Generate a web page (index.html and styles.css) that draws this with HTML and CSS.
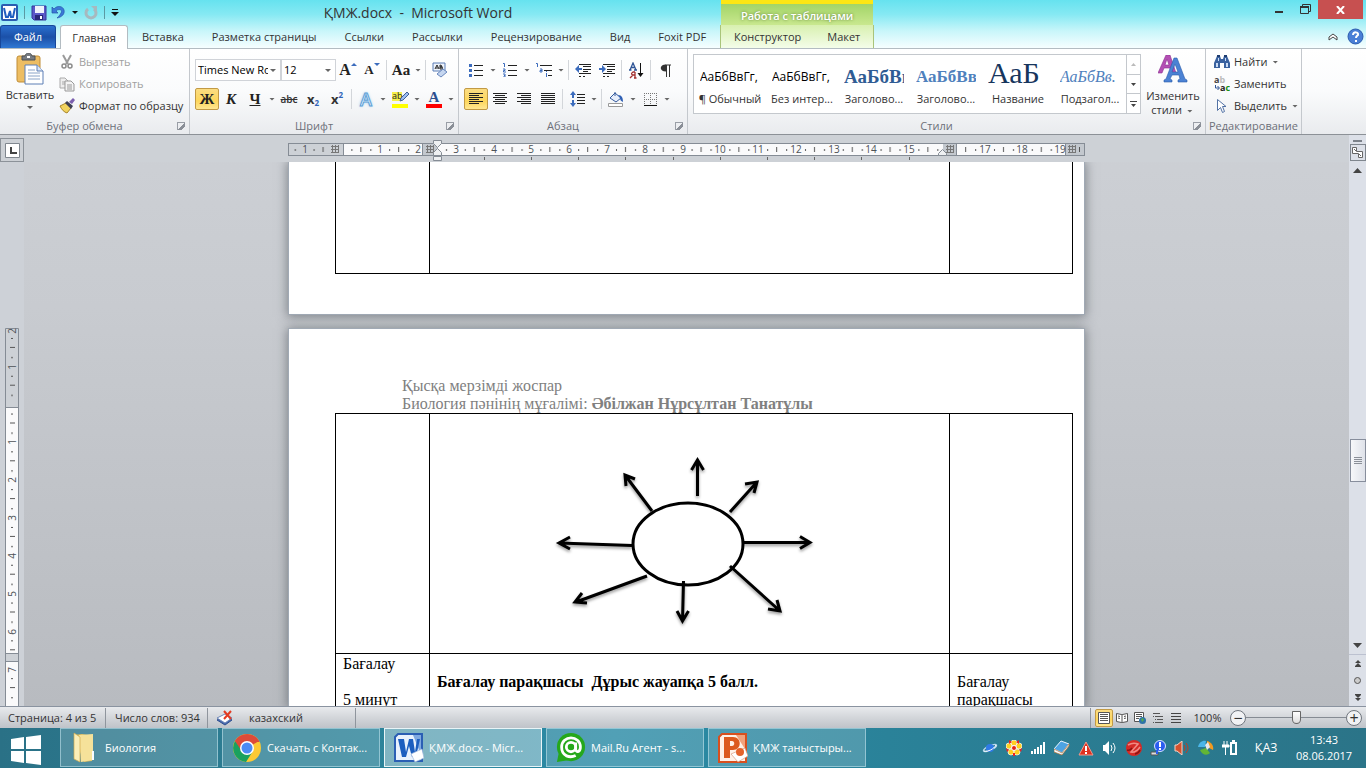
FILE: index.html
```html
<!DOCTYPE html>
<html lang="ru">
<head>
    <meta charset="UTF-8">
    <meta name="viewport" content="width=device-width, initial-scale=1.0">
    <title>ҚМЖ.docx - Microsoft Word</title>
    <link rel="stylesheet" href="styles.css">
</head>
<body>
    <header class="top">
        <div class="titlebar">
            <div class="quick-access">
                <svg width="17" height="17" viewBox="0 0 17 17"><rect x="1" y="1" width="15" height="15" rx="1" fill="#fff" stroke="#2a5db0" stroke-width="2"/><path d="M3 4l2 9h2l2-6 1 6h2l2-9" fill="none" stroke="#1f5fc0" stroke-width="2"/></svg>
                <span class="qa-line"></span>
                <button aria-label="Сохранить"><svg width="16" height="16" viewBox="0 0 16 16"><path d="M1 1h14v14H3l-2-2z" fill="#5a58c8" stroke="#35349a"/><path d="M4 1h9v7H4z" fill="#eef2fb"/><path d="M4 10h8v5H4z" fill="#282878"/><path d="M9 11h2v3H9z" fill="#fff"/></svg></button>
                <button aria-label="Отменить"><svg width="15" height="15" viewBox="0 0 15 15"><path d="M1 2v6h6L5 6c3-3 7-1 5 2-1 2-2 3-4 5 5-1 8-4 7-8-1-4-7-5-10-1z" fill="#3b78d8" stroke="#2455a8" stroke-width=".7"/></svg></button>
                <span class="caret dark"></span>
                <button aria-label="Повторить"><svg width="14" height="15" viewBox="0 0 14 15"><path d="M4 4a5 5 0 1 0 6 0" fill="none" stroke="#a7b9bf" stroke-width="3"/><path d="M7 1h6v6z" fill="#a7b9bf"/></svg></button>
                <span class="qa-line"></span>
                <button aria-label="Настройка панели"><svg width="8" height="7" viewBox="0 0 8 7"><path d="M1 0h6v1H1zM0 3h8L4 7z" fill="#111"/></svg></button>
            </div>
            <h1>ҚМЖ.docx&nbsp; -&nbsp; Microsoft Word</h1>
            <div class="window-buttons">
                <button aria-label="Свернуть"><svg width="9" height="10" viewBox="0 0 9 10"><path d="M0 7h8v2H0z" fill="#333"/></svg></button>
                <button aria-label="Развернуть"><svg width="11" height="10" viewBox="0 0 11 10"><path d="M.500 2.500h8v7h-8zM2.500 2V.500h8v7H9" fill="none" stroke="#333"/><path d="M0 2h9v2H0z" fill="#333"/></svg></button>
                <button class="close" aria-label="Закрыть"><svg width="9" height="8" viewBox="0 0 9 8"><path d="M1 0l7 8M8 0L1 8" stroke="#fff" stroke-width="2"/></svg></button>
            </div>
        </div>
        <nav class="tabs">
            <button class="tab file">Файл</button>
            <button class="tab active">Главная</button>
            <button class="tab">Вставка</button>
            <button class="tab">Разметка страницы</button>
            <button class="tab">Ссылки</button>
            <button class="tab">Рассылки</button>
            <button class="tab">Рецензирование</button>
            <button class="tab">Вид</button>
            <button class="tab">Foxit PDF</button>
            <div class="context-tabs">
                <span class="context-title">Работа с таблицами</span>
                <button class="tab">Конструктор</button>
                <button class="tab">Макет</button>
            </div>
            <div class="tabs-right">
                <button aria-label="Свернуть ленту"><svg width="10" height="8" viewBox="0 0 10 8"><path d="M1 4l4-3 4 3v3L5 4 1 7z" fill="#fff" stroke="#444"/></svg></button>
                <button aria-label="Справка"><svg width="17" height="17" viewBox="0 0 17 17"><circle cx="8.500" cy="8.500" r="7.500" fill="#4a7fd6" stroke="#2b5cae"/><path d="M6 7c0-4 6-3 5 0-1 1-2 1-2 3M9 12v2" fill="none" stroke="#fff" stroke-width="2"/></svg></button>
            </div>
        </nav>
    </header>

    <section class="ribbon">
        <div class="group clipboard">
            <div class="group-body">
                <button class="big">
                    <svg width="28" height="32" viewBox="0 0 28 32"><rect x="1" y="3" width="23" height="26" rx="2" fill="#edbd62" stroke="#c08d38"/><path d="M6 7V3h3c1-4 6-4 7 0h3v4z" fill="#777c82" stroke="#4c5156"/><path d="M11 3h3v2h-3z" fill="#fff"/><path d="M9 12h12l6 6v13H9z" fill="#fff" stroke="#5c7fb5"/><path d="M21 12v6h6" fill="#dbe6f5" stroke="#5c7fb5"/><path d="M12 17h7M12 20h12M12 23h12M12 26h12" stroke="#8aa4c8"/></svg>
                    <span>Вставить</span>
                    <span class="caret"></span>
                </button>
                <div class="stack">
                    <button class="small" disabled><svg width="16" height="16" viewBox="0 0 16 16"><path d="M4 1l5 9M12 1L7 10" stroke="#9a9a9a" stroke-width="2"/><circle cx="5" cy="12" r="2" fill="none" stroke="#8c8c8c" stroke-width="1.500"/><circle cx="11" cy="12" r="2" fill="none" stroke="#8c8c8c" stroke-width="1.500"/></svg>Вырезать</button>
                    <button class="small" disabled><svg width="16" height="16" viewBox="0 0 16 16"><path d="M1 2h5l3 3v7H1z" fill="#eee" stroke="#aaa"/><path d="M3 6h4M3 8h4" stroke="#aaa"/><path d="M6 5h6l3 3v7H6z" fill="#f4f4f4" stroke="#999"/><path d="M8 9h5M8 11h5M8 13h5" stroke="#999"/></svg>Копировать</button>
                    <button class="small"><svg width="16" height="16" viewBox="0 0 16 16"><path d="M1 8l6-3 5 5-4 5c-3-1-5-3-7-7z" fill="#f1d35e" stroke="#a9862b"/><path d="M6 5l2-2 6 5-2 3z" fill="#3d3f55"/><path d="M10 4l4-4 2 2-3 4z" fill="#7b5fae"/></svg>Формат по образцу</button>
                </div>
            </div>
            <div class="group-label"><span>Буфер обмена</span><i class="launcher"></i></div>
        </div>

        <div class="group font">
            <div class="group-body lines">
                <div class="line">
                    <span class="combo name"><select aria-label="Шрифт"><option>Times New Roman</option></select></span>
                    <span class="combo size"><select aria-label="Размер шрифта"><option>12</option></select></span>
                    <button class="ib serif big-a" aria-label="Увеличить размер">A<i class="up"></i></button>
                    <button class="ib serif small-a" aria-label="Уменьшить размер">A<i class="down"></i></button>
                    <span class="sep"></span>
                    <button class="ib serif case">Aa</button><span class="caret"></span>
                    <span class="sep"></span>
                    <button class="ib" aria-label="Очистить формат"><svg width="16" height="16" viewBox="0 0 16 16"><path d="M1 1h12v8H1z" fill="#eef3fb" stroke="#5a7db5"/><path d="M3 7l2-4 2 4M4 6h2M8 3v4h2q1-1 0-2H8h2q0-2-2-2" fill="none" stroke="#222"/><path d="M5 12l6-5 4 3-6 5z" fill="#c5d6f0" stroke="#6a88bd"/></svg></button>
                </div>
                <div class="line">
                    <button class="ib serif on">Ж</button>
                    <button class="ib serif italic">К</button>
                    <button class="ib serif underline">Ч</button><span class="caret"></span>
                    <button class="ib strike">abc</button>
                    <button class="ib script">x<sub>2</sub></button>
                    <button class="ib script">x<sup>2</sup></button>
                    <span class="sep"></span>
                    <button class="ib effect">A</button><span class="caret"></span>
                    <button class="ib marker" aria-label="Цвет выделения"><svg width="17" height="17" viewBox="0 0 17 17"><path d="M0 1h10v9H0z" fill="#f6f04a"/><text x="0" y="8" font-family="Open Sans, sans-serif" font-size="9" fill="#222">ab</text><path d="M8 10l1-3 6-6 2 2-6 6z" fill="#9dbdf0" stroke="#3f5f95"/><path d="M0 13h16v4H0z" fill="#ff0"/></svg></button><span class="caret"></span>
                    <button class="ib serif color"><span>A</span></button><span class="caret"></span>
                </div>
            </div>
            <div class="group-label"><span>Шрифт</span><i class="launcher"></i></div>
        </div>

        <div class="group paragraph">
            <div class="group-body lines">
                <div class="line">
                    <button class="ib" aria-label="Маркеры"><svg width="14" height="14" viewBox="0 0 14 14"><path d="M0 1h3v3H0zM0 6h3v3H0zM0 11h3v3H0z" fill="#3c6cbd"/><path d="M5 2.500h9M5 7.500h9M5 12.500h9" stroke="#222"/></svg></button><span class="caret"></span>
                    <button class="ib" aria-label="Нумерация"><svg width="14" height="14" viewBox="0 0 14 14"><path d="M0 .500h1.500V4M0 6h2v1.500H.500V9H3M0 11h2v3H0M1 12.500h1" fill="none" stroke="#3c6cbd"/><path d="M5 2.500h9M5 7.500h9M5 12.500h9" stroke="#222"/></svg></button><span class="caret"></span>
                    <button class="ib" aria-label="Многоуровневый список"><svg width="16" height="14" viewBox="0 0 16 14"><path d="M0 .500h1.500V4M4 6h2v3H4V7.500h2M10.500 10v4M10.500 8v1" fill="none" stroke="#3c6cbd"/><path d="M4 2.500h12M8 7.500h8M12 12.500h4" stroke="#222"/></svg></button><span class="caret"></span>
                    <span class="sep"></span>
                    <button class="ib" aria-label="Уменьшить отступ"><svg width="16" height="14" viewBox="0 0 16 14"><path d="M4 1.500h12M8 3.500h8M8 6.500h8M8 8.500h5M4 10.500h12" stroke="#222"/><path d="M4 13.500h2M8 13.500h2" stroke="#222"/><path d="M0 6l4-4v3h3v2H4v3z" fill="#3c6cbd"/></svg></button>
                    <button class="ib" aria-label="Увеличить отступ"><svg width="16" height="14" viewBox="0 0 16 14"><path d="M4 1.500h12M8 3.500h8M8 6.500h8M8 8.500h5M4 10.500h12" stroke="#222"/><path d="M4 13.500h2M8 13.500h2" stroke="#222"/><path d="M7 6L3 2v3H0v2h3v3z" fill="#3c6cbd"/></svg></button>
                    <span class="sep"></span>
                    <button class="ib" aria-label="Сортировка"><svg width="15" height="17" viewBox="0 0 15 17"><path d="M1 8l3-7 3 7M2 5.500h4M0 8h2.500M5 8h3" fill="none" stroke="#2f5597" stroke-width="1.300"/><path d="M6 10v6M6 10H4q-3 2 0 3h2M4 13l-3 3M5 16h2.500" fill="none" stroke="#a33030" stroke-width="1.300"/><path d="M11.500 1v12" stroke="#111"/><path d="M8.500 11h6l-3 4z" fill="#111"/></svg></button>
                    <span class="sep"></span>
                    <button class="ib" aria-label="Отобразить все знаки"><svg width="11" height="13" viewBox="0 0 11 13"><path d="M5.500 1H11M6.500 1v12M9.500 1v12" stroke="#333"/><path d="M6 .500v7c-7 0-7-7 0-7z" fill="#333"/></svg></button>
                </div>
                <div class="line">
                    <button class="ib on" aria-label="По левому краю"><svg width="14" height="12" viewBox="0 0 14 12"><path d="M0 .500h14M0 2.500h10M0 4.500h14M0 6.500h10M0 8.500h14M0 10.500h10" stroke="#222"/></svg></button>
                    <button class="ib" aria-label="По центру"><svg width="14" height="12" viewBox="0 0 14 12"><path d="M0 .500h14M2 2.500h10M0 4.500h14M2 6.500h10M0 8.500h14M2 10.500h10" stroke="#222"/></svg></button>
                    <button class="ib" aria-label="По правому краю"><svg width="14" height="12" viewBox="0 0 14 12"><path d="M0 .500h14M4 2.500h10M0 4.500h14M4 6.500h10M0 8.500h14M4 10.500h10" stroke="#222"/></svg></button>
                    <button class="ib" aria-label="По ширине"><svg width="14" height="12" viewBox="0 0 14 12"><path d="M0 .500h14M0 2.500h14M0 4.500h14M0 6.500h14M0 8.500h14M0 10.500h14" stroke="#222"/></svg></button>
                    <span class="sep"></span>
                    <button class="ib" aria-label="Интервал"><svg width="15" height="16" viewBox="0 0 15 16"><path d="M3 0l3 4H4v3H2V4H0zM3 16l3-4H4V9H2v3H0z" fill="#3c6cbd"/><path d="M7 3.500h8M7 6.500h8M7 9.500h8M7 12.500h8" stroke="#222"/></svg></button><span class="caret"></span>
                    <span class="sep"></span>
                    <button class="ib" aria-label="Заливка"><svg width="16" height="16" viewBox="0 0 16 16"><path d="M2 7l5-5 6 5-5 4z" fill="#e7eefb" stroke="#345a9c"/><path d="M7 5V1" stroke="#345a9c"/><path d="M10 4c4 0 5 3 5 7-2-1-3-2-3-4z" fill="#2f5fb4"/><path d="M.500 12.500h14v3H.500z" fill="#fff" stroke="#999"/></svg></button><span class="caret"></span>
                    <button class="ib" aria-label="Границы"><svg width="13" height="13" viewBox="0 0 13 13"><path d="M0 .500h13M0 6.500h13M.500 0v12M6.500 0v12M12.500 0v12" stroke="#777" stroke-dasharray="1 1"/><path d="M0 12.500h13" stroke="#111"/></svg></button><span class="caret"></span>
                </div>
            </div>
            <div class="group-label"><span>Абзац</span><i class="launcher"></i></div>
        </div>

        <div class="group styles">
            <div class="group-body">
                <div class="gallery">
                    <button class="style-item"><span class="sample">АаБбВвГг,</span><span class="style-name">¶ Обычный</span></button>
                    <button class="style-item"><span class="sample">АаБбВвГг,</span><span class="style-name">Без интер...</span></button>
                    <button class="style-item"><span class="sample h1s">АаБбВв</span><span class="style-name">Заголово...</span></button>
                    <button class="style-item"><span class="sample h2s">АаБбВв</span><span class="style-name">Заголово...</span></button>
                    <button class="style-item"><span class="sample titles">АаБ</span><span class="style-name">Название</span></button>
                    <button class="style-item"><span class="sample subs">АаБбВв.</span><span class="style-name">Подзагол...</span></button>
                    <div class="gallery-scroll">
                        <button disabled aria-label="Вверх"><svg width="5" height="3" viewBox="0 0 5 3"><path d="M0 3h5L2.500 0z" fill="#bbb"/></svg></button>
                        <button aria-label="Вниз"><svg width="5" height="3" viewBox="0 0 5 3"><path d="M0 0h5L2.500 3z" fill="#444"/></svg></button>
                        <button aria-label="Все стили"><svg width="7" height="6" viewBox="0 0 7 6"><path d="M0 0h7v1H0zM1 3h5L3.500 6z" fill="#444"/></svg></button>
                    </div>
                </div>
                <button class="big change">
                    <svg width="30" height="28" viewBox="0 0 30 28"><path fill-rule="evenodd" d="M0 18L8 0h4l6 18h-4l-2-5H6l-2 5zM7 10h4L9 4z" fill="#b44fb4" stroke="#8a3190" stroke-width=".6"/><path fill-rule="evenodd" d="M6 27v-2l2-1 8-21h3l8 21 2 1v2h-9v-2l2-1-1-4h-7l-2 4 2 1v2zM14 17h6l-3-8z" fill="#4b82d4" stroke="#2a5baa" stroke-width=".6"/></svg>
                    <span>Изменить</span>
                    <span>стили <span class="caret"></span></span>
                </button>
            </div>
            <div class="group-label"><span>Стили</span><i class="launcher"></i></div>
        </div>

        <div class="group editing">
            <div class="group-body">
                <div class="stack">
                    <button class="small"><svg width="16" height="16" viewBox="0 0 16 16"><path d="M3 2h3l1 3h2l1-3h3l3 7v5h-6V9H6v5H0V9z" fill="#39619f"/><path d="M3 1h3v2H3zM10 1h3v2h-3z" fill="#1d3c70"/><path d="M2 9h2v4H2zM12 9h2v4h-2zM4 4h1v3H4zM11 4h1v3h-1z" fill="#c9dbf5"/></svg>Найти <span class="caret"></span></button>
                    <button class="small"><svg width="16" height="16" viewBox="0 0 16 16"><text x="0" y="7" font-family="Open Sans, sans-serif" font-size="9" font-weight="bold" fill="#444">a<tspan fill="#bbb">b</tspan></text><text x="6" y="15" font-family="Open Sans, sans-serif" font-size="9" font-weight="bold" fill="#222">a<tspan fill="#159015">c</tspan></text><path d="M1.500 9v3H5M3.500 10l2 2-2 2" fill="none" stroke="#2e5496"/></svg>Заменить</button>
                    <button class="small"><svg width="16" height="16" viewBox="0 0 16 16"><path d="M3.500 1.500v11l3-3 2 5 2-1-2-5h3.500z" fill="#fff" stroke="#5272a5"/></svg>Выделить <span class="caret"></span></button>
                </div>
            </div>
            <div class="group-label">Редактирование</div>
        </div>
    </section>

    <main class="workspace">
        <button class="tab-stop" aria-label="Позиция табуляции"><svg width="15" height="15" viewBox="0 0 15 15"><path d="M.500 .500h14v14H.500z" fill="#fff" stroke="#7f868e"/><path d="M6 4v6h6" fill="none" stroke="#444" stroke-width="2"/></svg></button>
        <div class="ruler-row">
            <svg width="797" height="23" viewBox="288 139 797 23" font-family="Open Sans, sans-serif" font-size="10" text-anchor="middle" fill="#4d5257">
                <defs>
                    <pattern id="cm" x="342.400" y="143" width="37.800" height="13" patternUnits="userSpaceOnUse">
                        <path d="M9 6h1v2H9zM18 4h1v5h-1zM28 6h1v2h-1z" fill="#555"/>
                    </pattern>
                    <g id="column"><path d="M0 1.500h8M0 4.500h8M0 7.500h8M1.500 0v8M4.500 0v8M7.500 0v8" stroke="#777"/></g>
                </defs>
                <rect x="288.500" y="143.500" width="796" height="12" fill="#cdd1d6" stroke="#858c95"/>
                <path d="M343 144h84v11h-84zM438 144h505v11H438zM957 144h108v11H957z" fill="#fafafb"/>
                <rect x="288" y="143" width="42" height="13" fill="url(#cm)"/>
                <rect x="346" y="143" width="78" height="13" fill="url(#cm)"/>
                <rect x="441" y="143" width="500" height="13" fill="url(#cm)"/>
                <rect x="960" y="143" width="104" height="13" fill="url(#cm)"/>
                <path d="M343.500 144v11M956.500 144v11M1065.500 144v11M422.500 144v11" stroke="#858c95"/>
                <path d="M423 144h15v11h-15zM943 144h13v11h-13zM1066 144h18v11h-18z" fill="#c3c8ce"/>
                <use href="#column" x="331" y="145"/><use href="#column" x="426" y="145"/><use href="#column" x="946" y="145"/><use href="#column" x="1068" y="145"/>
                <path d="M1079.500 147v5" stroke="#555"/>
                <text x="305" y="153">1</text><text x="380" y="153">1</text><text x="418" y="153">2</text><text x="456" y="153">3</text><text x="494" y="153">4</text><text x="531" y="153">5</text><text x="569" y="153">6</text><text x="607" y="153">7</text><text x="645" y="153">8</text><text x="683" y="153">9</text><text x="720" y="153">10</text><text x="758" y="153">11</text><text x="796" y="153">12</text><text x="834" y="153">13</text><text x="871" y="153">14</text><text x="909" y="153">15</text><text x="985" y="153">17</text><text x="1022" y="153">18</text><text x="1060" y="153">19</text>
                <path d="M484.500 157v3M531.500 157v3M578.500 157v3M625.500 157v3M673.500 157v3M720.500 157v3M767.500 157v3M814.500 157v3M861.500 157v3M909.500 157v3" stroke="#666"/>
                <path d="M433.500 140.500h8v3l-4 4-4-4zM437.500 148.500l4 4v3h-8v-3zM433.500 156.500h8v4h-8zM942.500 149.500l4 4v2h-8v-2z" fill="#eef0f2" stroke="#858c95"/>
            </svg>
        </div>
        <div class="ruler-column">
            <svg width="14" height="378" viewBox="5 328 14 378" font-family="Open Sans, sans-serif" font-size="10" text-anchor="middle" fill="#4d5257">
                <defs>
                    <pattern id="cmv" x="5" y="404.600" width="14" height="37.800" patternUnits="userSpaceOnUse">
                        <path d="M6 9h2v1H6zM5 18h5v1H5zM6 28h2v1H6z" fill="#555"/>
                    </pattern>
                </defs>
                <path d="M5.500 328.500h13v400h-13z" fill="#cdd1d6" stroke="#858c95"/>
                <path d="M6 408h12v245H6zM6 662h12v50H6z" fill="#fafafb"/>
                <path d="M5 407.500h14M5 653.500h14M5 661.500h14" stroke="#858c95"/>
                <path d="M5 332h14v320H5zM5 662h14v50H5z" fill="url(#cmv)"/>
                <text transform="translate(16 331) rotate(-90)">2</text><text transform="translate(16 367) rotate(-90)">1</text><text transform="translate(16 442) rotate(-90)">1</text><text transform="translate(16 480) rotate(-90)">2</text><text transform="translate(16 518) rotate(-90)">3</text><text transform="translate(16 556) rotate(-90)">4</text><text transform="translate(16 594) rotate(-90)">5</text><text transform="translate(16 632) rotate(-90)">6</text><text transform="translate(16 670) rotate(-90)">7</text>
            </svg>
        </div>

        <div class="document">
            <article class="page first">
                <table class="plan">
                    <tr><td class="stage"></td><td></td><td class="result"></td></tr>
                </table>
            </article>
            <article class="page second">
                <div class="page-header">
                    <p>Қысқа мерзімді жоспар</p>
                    <p>Биология пәнінің мұғалімі: <b>Әбілжан Нұрсұлтан Танатұлы</b></p>
                </div>
                <table class="plan">
                    <tr class="figure-row">
                        <td class="stage"></td>
                        <td class="figure">
                            <svg width="290" height="200" viewBox="0 0 290 200">
                                <defs>
                                    <filter id="soft" x="-10%" y="-10%" width="120%" height="120%"><feDropShadow dx="0" dy="2" stdDeviation="1.500" flood-opacity=".4"/></filter>
                                </defs>
                                <ellipse cx="148" cy="104" rx="55" ry="41" fill="#fff" stroke="#000" stroke-width="3"/>
                                <g fill="none" stroke="#000" stroke-width="3" filter="url(#soft)">
                                    <path d="M157.500 56V20M151.500 30l6-10 6 10"/>
                                    <path d="M112 71L85 35M86 46l-1-11 10 4"/>
                                    <path d="M190 72l27-30M205 44l12-2-3 11"/>
                                    <path d="M203 102.500h67M260 96.500l10 6-10 6"/>
                                    <path d="M190 126l50 45M228 169l12 2-3-11"/>
                                    <path d="M143.500 141l-1 40M137 171l5.500 10 6-10"/>
                                    <path d="M107 136l-71 26M42 153l-7 9 12 1"/>
                                    <path d="M92 105.500l-73-2.500M30 97l-11 6 11 6"/>
                                </g>
                            </svg>
                        </td>
                        <td class="result"></td>
                    </tr>
                    <tr>
                        <td>Бағалау<br><br>5 минут</td>
                        <td><br><b>Бағалау парақшасы&nbsp; Дұрыс жауапқа 5 балл.</b></td>
                        <td><br>Бағалау парақшасы</td>
                    </tr>
                </table>
            </article>
        </div>

        <div class="scrollbar">
            <span class="split"></span>
            <button class="ruler-toggle" aria-label="Линейка"><svg width="11" height="11" viewBox="0 0 11 11"><path d="M.500 .500h4v4h6v6h-4v-4h-6zM7 7l2 2M2 2l2 2" fill="#fff" stroke="#666"/></svg></button>
            <button class="arrow" aria-label="Вверх"><svg width="9" height="5" viewBox="0 0 9 5"><path d="M0 5h9L4.500 0z" fill="#444"/></svg></button>
            <div class="track"><div class="thumb"></div></div>
            <button class="arrow" aria-label="Вниз"><svg width="9" height="5" viewBox="0 0 9 5"><path d="M0 0h9L4.500 5z" fill="#444"/></svg></button>
            <div class="browse">
                <button aria-label="Предыдущая страница"><svg width="6" height="7" viewBox="0 0 6 7"><path d="M0 3l3-3 3 3zM0 6l3-3 3 3v1H0z" fill="#444"/></svg></button>
                <button aria-label="Выбор объекта перехода"><svg width="7" height="7" viewBox="0 0 7 7"><circle cx="3.500" cy="3.500" r="3" fill="#ccc" stroke="#555"/></svg></button>
                <button aria-label="Следующая страница"><svg width="6" height="7" viewBox="0 0 6 7"><path d="M0 0h6v1L3 4 0 1zM0 4h6L3 7z" fill="#444"/></svg></button>
            </div>
        </div>
    </main>

    <footer class="statusbar">
        <button class="status pages">Страница: 4 из 5</button>
        <button class="status words">Число слов: 934</button>
        <button class="status language"><svg width="17" height="16" viewBox="0 0 17 16"><path d="M1 10l8-4 7 4-7 5z" fill="#4568ae" stroke="#2f4f90"/><path d="M1 8l8-4 7 4-7 5z" fill="#fff" stroke="#6e87b8"/><path d="M8 1l7 8M15 1L8 9" stroke="#e33b22" stroke-width="2"/></svg>казахский</button>
        <div class="views">
            <button class="on" aria-label="Разметка страницы"><svg width="12" height="12" viewBox="0 0 12 12"><path d="M.500 .500h11v11H.500z" fill="#fff" stroke="#555"/><path d="M2 2.500h8M2 4.500h8M2 6.500h8M2 8.500h8" stroke="#555"/></svg></button>
            <button aria-label="Режим чтения"><svg width="12" height="12" viewBox="0 0 12 12"><path d="M.500 1.500l5 1 1 0 5-1v8l-5 1h-1l-5-1zM6 2v9M2 4l2 .500M2 6l2 .500M8 4.500l2-.500M8 6.500l2-.500" fill="#fff" stroke="#555"/></svg></button>
            <button aria-label="Веб-документ"><svg width="12" height="12" viewBox="0 0 12 12"><path d="M.500 .500h9v9h-9z" fill="#fff" stroke="#555"/><path d="M2 2.500h6M2 4.500h6M2 6.500h3" stroke="#555"/><circle cx="8.500" cy="8.500" r="3.500" fill="#2f73a8"/><path d="M7 7l2-1 1 2-2 2z" fill="#56a94c"/></svg></button>
            <button aria-label="Структура"><svg width="10" height="10" viewBox="0 0 10 10"><path d="M0 .500h7M2 3.500h8M4 6.500h6M2 9.500h8" stroke="#555"/><path d="M0 3h1v1H0zM2 6h1v1H2zM0 9h1v1H0z" fill="#555"/></svg></button>
            <button aria-label="Черновик"><svg width="10" height="10" viewBox="0 0 10 10"><path d="M0 .500h10M0 3.500h10M0 6.500h10M0 9.500h10" stroke="#444"/></svg></button>
        </div>
        <button class="percent">100%</button>
        <div class="zoom">
            <button aria-label="Уменьшить">−</button>
            <input type="range" min="0" max="100" value="50" aria-label="Масштаб">
            <button aria-label="Увеличить">+</button>
        </div>
    </footer>

    <nav class="taskbar">
        <button class="start" aria-label="Пуск"><svg width="30" height="30" viewBox="0 0 30 30"><path d="M0 4l13-2v12H0zM15 2l15-2v14H15zM0 16h13v12L0 26zM15 16h15v14l-15-2z" fill="#fff"/></svg></button>
        <button class="task"><svg width="28" height="32" viewBox="0 0 28 32"><path d="M3 3l8-1 10 2v25l-8 1z" fill="#e0bd5c"/><path d="M8 3l14-1v26l-12 2z" fill="#f6e29a"/><path d="M3 1l6 4v25l-6-3z" fill="#fbeeb8" stroke="#d0ab4c" stroke-width=".7"/><path d="M21 19h2v9h-2z" fill="#f7fbff"/></svg><span>Биология</span></button>
        <button class="task"><svg width="28" height="28" viewBox="0 0 28 28"><circle cx="14" cy="14" r="14" fill="#fcc934"/><path d="M14 14L2 7a14 14 0 0 1 24 0z" fill="#dd4b39"/><path d="M14 14L2 7a14 14 0 0 0 11 21l7-11z" fill="#1aa15f"/><path d="M14 8h12.600A14 14 0 0 0 2 7l6 9z" fill="#dd4b39"/><circle cx="14" cy="14" r="7" fill="#fff"/><circle cx="14" cy="14" r="5.500" fill="#4c8bf5"/></svg><span>Скачать с Контак...</span></button>
        <button class="task current"><svg width="30" height="30" viewBox="0 0 30 30"><path d="M4 1h24v27H1V4z" fill="#e9f2fd" stroke="#2b5fb4" stroke-width="2"/><path d="M19 2h8v20z" fill="#7fa9e0"/><path d="M4 6h6l2 13L15 6h4l2 13 2-13h3l-4 18h-4l-3-11-3 11H8z" fill="#1d5fbf"/><path d="M17 21l11-5 2 9-9 4z" fill="#fff" stroke="#9fb9dd" stroke-width=".7"/></svg><span>ҚМЖ.docx - Micr...</span></button>
        <button class="task"><svg width="32" height="32" viewBox="0 0 32 32"><circle cx="16" cy="15" r="15" fill="#25a81b"/><path d="M3 21L1 31l12-2z" fill="#25a81b"/><circle cx="16" cy="15" r="5" fill="none" stroke="#fff" stroke-width="3"/><path d="M21 10v7c0 4 5 4 5-2 0-13-20-13-20 0 0 10 9 12 15 9" fill="none" stroke="#fff" stroke-width="3"/></svg><span>Mail.Ru Агент - s...</span></button>
        <button class="task"><svg width="30" height="30" viewBox="0 0 30 30"><path d="M4 1h24v28H1V4z" fill="#fff1e8" stroke="#d8501f" stroke-width="2"/><path d="M18 2h9v14z" fill="#f2a27c"/><path fill-rule="evenodd" d="M6 4h9c9 0 9 13 0 13h-3v8H6zM12 8v5h2c3 0 3-5 0-5z" fill="#dc5a1f"/><path d="M13 21l14-6 3 8-10 6z" fill="#fff" stroke="#d99b80" stroke-width=".7"/><circle cx="22" cy="19" r="4" fill="#e4622a"/></svg><span>ҚМЖ таныстыры...</span></button>
        <div class="tray">
            <svg width="16" height="16" viewBox="0 0 16 16"><ellipse cx="8" cy="8" rx="7" ry="2" transform="rotate(-25 8 8)" fill="none" stroke="#bcd9ef" stroke-width="1.500"/><circle cx="8" cy="8" r="4" fill="#2f7be8"/><path d="M2 11c4 1 10-2 12-6" fill="none" stroke="#fff"/></svg>
            <svg width="16" height="16" viewBox="0 0 16 16"><g fill="#ffd021" stroke="#fff" stroke-width=".7"><circle cx="8" cy="3" r="3"/><circle cx="3" cy="6" r="3"/><circle cx="13" cy="6" r="3"/><circle cx="5" cy="12" r="3"/><circle cx="11" cy="12" r="3"/></g><path d="M3 0l3 2-3 2zM13 0l-3 2 3 2zM0 8l3 2-2 2zM16 8l-3 2 2 2zM7 13h2v3H7z" fill="#e22"/><circle cx="8" cy="8" r="2.500" fill="#e32214" stroke="#fff"/></svg>
            <svg width="16" height="12" viewBox="0 0 16 12"><path d="M1 9h2v3H1zM4 7h2v5H4zM7 5h2v7H7zM10 3h2v9h-2zM13 0h2v12h-2z" fill="#fff"/></svg>
            <svg width="16" height="16" viewBox="0 0 16 16"><path d="M0 9l7-8 8 3-7 9z" fill="#4da3e2" stroke="#eaf5ff"/><path d="M0 9v3l8 3 7-9V4l-7 9z" fill="#f7fbff" stroke="#b07030" stroke-width=".7"/></svg>
            <svg width="16" height="15" viewBox="0 0 16 15"><path d="M8 1l7 13H1z" fill="#e0301e" stroke="#f3998c"/><path d="M7 5h2v5H7zM7 11h2v2H7z" fill="#fff"/></svg>
            <svg width="16" height="14" viewBox="0 0 16 14"><path d="M1 4h2l4-4v14l-4-4H1z" fill="#fff"/><path d="M9 4q2 3 0 6M11 2q4 5 0 10" fill="none" stroke="#fff"/></svg>
            <svg width="16" height="16" viewBox="0 0 16 16"><circle cx="8" cy="8" r="8" fill="#d42a26"/><path d="M2 5q5-3 10-1L5 12q5 1 9-5" fill="none" stroke="#f08a84" stroke-width="1.500"/><path d="M1 10q3 1 5-2M9 14q4-1 5-4" fill="none" stroke="#8a1311" stroke-width="1.500"/></svg>
            <svg width="16" height="16" viewBox="0 0 16 16"><circle cx="10" cy="6" r="5.500" fill="#2a5df0" stroke="#d9e4ff"/><path d="M9 2h2v5H9zM9 8h2v2H9z" fill="#fff"/><path d="M1 12h7v3H1z" fill="#ddd" stroke="#555"/><path d="M7 10v4" stroke="#2a5df0" stroke-width="2"/></svg>
            <svg width="16" height="14" viewBox="0 0 16 14"><path d="M1 4h2l5-4v14l-5-4H1z" fill="#d4512e" stroke="#f7d3c4"/><path d="M10 4q2 3 0 6M12 2q4 5 0 10" fill="none" stroke="#c23d22"/></svg>
            <svg width="16" height="16" viewBox="0 0 16 16"><path d="M0 7c1-5 5-7 8-6l-1 6z" fill="#4bb5e8"/><path d="M9 1c5 1 7 6 6 9l-6-3z" fill="#f39a20"/><path d="M2 10l6-2 4 5c-3 3-8 2-10-3z" fill="#63b534"/><path d="M7 5l3-3 2 5-3 3z" fill="#e6e9ee"/></svg>
            <svg width="16" height="16" viewBox="0 0 16 16"><path d="M9 3h5v11H9z" fill="none" stroke="#fff" stroke-width="2"/><path d="M10 0h3v2h-3z" fill="#fff"/><path d="M2 1v4M5 1v4M0 5h7v2H0zM3.500 7v8" fill="#fff" stroke="#fff"/></svg>
        </div>
        <button class="lang">ҚАЗ</button>
        <button class="clock"><span>13:43</span><span>08.06.2017</span></button>
    </nav>
</body>
</html>
```
FILE: styles.css
```css
:root {
    --ui-font: 'Open Sans', 'Noto Sans', sans-serif;
    --doc-font: 'Liberation Serif', 'Times New Roman', serif;
    --line: #c4c8cd;
    --text: #333333;
    --on-fill: linear-gradient(#fbdc82, #fdd65c 60%, #ffe791);
    --on-border: #c29a45;
}

* {
    margin: 0;
    padding: 0;
    box-sizing: border-box;
}

body {
    display: flex;
    flex-direction: column;
    height: 100vh;
    overflow: hidden;
    font-family: var(--ui-font);
    font-size: 11px;
    line-height: 16px;
    color: var(--text);
}

button {
    display: flex;
    align-items: center;
    justify-content: center;
    border: none;
    background: none;
    font: inherit;
    color: inherit;
    white-space: nowrap;
}

svg {
    display: block;
    flex: none;
}

.caret {
    display: inline-block;
    flex: none;
    width: 10px;
    height: 3px;
    background: #666;
    clip-path: polygon(2px 0, 8px 0, 5px 3px);
    vertical-align: middle;
}

.caret.dark {
    background: #111;
}

/* Title bar and tabs */
.top {
    flex: none;
    background: linear-gradient(#66e2ef, #86e9f3 30%, #c9f6fa 65%, #f6feff);
    border-bottom: 1px solid #b3bcc2;
}

.titlebar {
    display: flex;
    height: 25px;
}

.quick-access {
    display: flex;
    align-items: center;
    gap: 4px;
    width: 122px;
    padding-left: 1px;
}

.qa-line {
    width: 1px;
    height: 13px;
    margin: 0 2px;
    background: #5b9aa3;
}

.titlebar h1 {
    width: 592px;
    text-align: center;
    font-size: 14px;
    font-weight: 400;
    line-height: 25px;
}

.window-buttons {
    display: flex;
    align-items: flex-start;
    margin-left: auto;
    padding-right: 3px;
}

.window-buttons button {
    width: 26px;
    height: 18px;
}

.window-buttons .close {
    width: 45px;
    height: 19px;
    background: #c75050;
}

.tabs {
    display: flex;
    height: 23px;
}

.tab {
    height: 23px;
    padding: 0 14px;
}

.tab.file {
    width: 56px;
    margin-right: 4px;
    border: 1px solid #17479a;
    border-bottom: none;
    border-radius: 3px 3px 0 0;
    background: linear-gradient(#2a6fce, #1b50a8 50%, #2f78d4);
    color: #fff;
}

.tab.active {
    width: 68px;
    height: 24px;
    padding: 0;
    border: 1px solid #b3bcc2;
    border-bottom: none;
    border-radius: 3px 3px 0 0;
    background: #fff;
}

.context-tabs {
    position: relative;
    display: flex;
    justify-content: center;
    width: 154px;
    border: solid #a9c47a;
    border-width: 0 1px;
    background: linear-gradient(#d8f0b0, #f4fde9);
}

.context-tabs .tab {
    padding: 0 13px;
}

/* Coloured cap that reaches up over the title bar */
.context-title {
    position: absolute;
    left: 0;
    right: 0;
    bottom: 100%;
    height: 25px;
    border-top: 4px solid #fce614;
    background: linear-gradient(#a2d467, #c9e88f);
    color: #fff;
    font-weight: 600;
    line-height: 23px;
    text-align: center;
    text-shadow: 0 0 3px #5d7d33;
}

.tabs-right {
    display: flex;
    align-items: center;
    gap: 9px;
    margin-left: auto;
    padding-right: 2px;
}

/* Ribbon */
.ribbon {
    display: flex;
    flex: none;
    height: 86px;
    background: linear-gradient(#ffffff, #fafbfc 50%, #e9ebee);
    border-bottom: 1px solid #8c9197;
}

.group {
    display: flex;
    flex-direction: column;
    flex: none;
    border-right: 1px solid var(--line);
}

.clipboard { width: 190px; }
.font { width: 269px; }
.paragraph { width: 229px; }
.styles { width: 518px; }
.editing { width: 96px; }

.group-body {
    display: flex;
    flex: 1;
}

.group-label {
    display: flex;
    align-items: center;
    justify-content: center;
    height: 17px;
    color: #6c7079;
}

.group-label span {
    margin: 0 auto;
    padding-right: 8px;
}

.launcher {
    width: 8px;
    height: 8px;
    margin-right: 4px;
    border: solid #999ea6;
    border-width: 1px 0 0 1px;
    background: linear-gradient(135deg, transparent 45%, #8a8f97 45%, #8a8f97 75%, transparent 75%);
}

.big {
    flex-direction: column;
    justify-content: flex-start;
    width: 54px;
    margin-left: 3px;
    padding-top: 4px;
}

.big > span:not(.caret) {
    line-height: 14px;
}

.big > .caret {
    margin-top: 4px;
}

.big svg {
    margin-bottom: 3px;
}

.stack {
    display: flex;
    flex-direction: column;
    align-items: flex-start;
    padding-top: 2px;
}

.small {
    height: 22px;
    padding-left: 2px;
}

.small svg {
    margin-right: 4px;
}

.small .caret {
    margin-left: 3px;
}

.small:disabled {
    color: #a0a0a0;
}

.lines {
    flex-direction: column;
    gap: 7px;
    padding: 10px 0 0 5px;
}

.line {
    display: flex;
    align-items: center;
    height: 22px;
}

.ib {
    flex: none;
    width: 24px;
    height: 22px;
}

.on {
    border: 1px solid var(--on-border);
    border-radius: 2px;
    background: var(--on-fill);
}

.sep {
    flex: none;
    width: 1px;
    height: 20px;
    margin: 0 2px;
    background: #d3d6da;
}

.combo {
    position: relative;
    flex: none;
    height: 22px;
}

.combo.name { width: 86px; }
.combo.size { width: 55px; }

.combo select {
    width: 100%;
    height: 22px;
    padding: 0 12px 0 2px;
    border: 1px solid #d0d3d8;
    border-radius: 0;
    background: #fff;
    appearance: none;
    overflow: hidden;
    font: inherit;
    color: #000;
}

.combo::after {
    content: '';
    position: absolute;
    top: 10px;
    right: 5px;
    border: 3px solid transparent;
    border-top-color: #666;
    border-bottom: none;
}

.serif {
    font-family: var(--doc-font);
    font-weight: 700;
    font-size: 15px;
    color: #222;
}

.big-a { font-size: 16px; }
.small-a { font-size: 13px; }
.italic { font-style: italic; }
.underline { text-decoration: underline; }

.up,
.down {
    align-self: flex-start;
    margin-top: 4px;
    border: 3px solid transparent;
}

.up {
    border-bottom-color: #3c6cbd;
    border-top: none;
}

.down {
    border-top-color: #3c6cbd;
    border-bottom: none;
}

.strike {
    font-weight: 600;
    font-size: 10px;
    text-decoration: line-through;
}

.script {
    font-size: 13px;
    font-weight: 700;
}

.script sub,
.script sup {
    font-size: 8px;
    line-height: 8px;
    color: #2f62b8;
}

.script sub { padding-top: 8px; }
.script sup { padding-bottom: 8px; }

.effect {
    font-size: 18px;
    font-weight: 600;
    color: #e3f2fd;
    -webkit-text-stroke: 1px #5d9fd6;
    text-shadow: 0 0 3px #7ab8ea;
}

.color {
    color: #2c4f8f;
}

.color span {
    padding: 0 3px;
    border-bottom: 4px solid #f00;
    line-height: 13px;
}

.gallery {
    display: flex;
    height: 60px;
    margin: 5px 0 0 5px;
    border: 1px solid var(--line);
    background: #fff;
}

.style-item {
    flex-direction: column;
    width: 72px;
    padding: 0 6px;
    overflow: hidden;
}

.sample {
    width: 60px;
    height: 36px;
    overflow: hidden;
    color: #000;
    font-size: 12px;
    line-height: 44px;
    text-align: left;
}

.h1s,
.h2s,
.titles,
.subs {
    font-family: var(--doc-font);
}

.h1s {
    color: #2f5c94;
    font-size: 19px;
    font-weight: 700;
}

.h2s {
    color: #4f81bd;
    font-size: 17px;
    font-weight: 700;
}

.titles {
    color: #17365d;
    font-size: 30px;
    line-height: 36px;
}

.subs {
    color: #4f81bd;
    font-size: 16px;
    font-style: italic;
}

.style-name {
    height: 22px;
}

.gallery-scroll {
    display: flex;
    flex-direction: column;
    width: 14px;
    border-left: 1px solid var(--line);
}

.gallery-scroll button {
    flex: 1;
}

.gallery-scroll button + button {
    border-top: 1px solid var(--line);
}

.change {
    margin-left: 5px;
    padding-top: 6px;
}

.change svg {
    margin-bottom: 6px;
}

.editing .stack {
    padding-left: 6px;
}

/* Document area */
.workspace {
    display: grid;
    grid-template: 27px minmax(0, 1fr) / 24px minmax(0, 1fr) 17px;
    flex: 1;
    min-height: 0;
    background: linear-gradient(#cdd0d5, #c8cbd0 30%, #b8bbc0);
}

.tab-stop {
    height: 24px;
    margin-top: 3px;
    border: 1px solid #8c9299;
    background: #cdd1d6;
}

.ruler-row {
    display: flex;
    justify-content: center;
    padding-top: 4px;
    background: #cdd1d6;
}

.ruler-column {
    grid-column: 1;
    display: flex;
    justify-content: center;
    align-items: flex-end;
    background: #cdd1d7;
    overflow: hidden;
}

.document {
    display: flex;
    flex-direction: column;
    align-items: center;
    gap: 15px;
    overflow: hidden;
}

.page {
    width: 795px;
    padding: 0 10px 0 46px;
    background: #fff;
    box-shadow: 0 0 0 1px #a0a9b4, 0 1px 10px 2px rgba(70, 75, 82, 0.55);
}

.first {
    flex: none;
    padding-bottom: 40px;
}

.second {
    flex: 1;
    min-height: 0;
    padding-top: 48px;
}

.page-header {
    padding-left: 67px;
    color: #808080;
}

.page-header,
.plan {
    font-family: var(--doc-font);
    font-size: 16px;
    line-height: 18px;
}

.plan {
    width: 738px;
    border-collapse: collapse;
    table-layout: fixed;
    color: #000;
}

.plan td {
    padding: 1px 7px 0;
    border: 1px solid #000;
    vertical-align: top;
}

.plan .stage { width: 94px; }
.plan .result { width: 123px; }

.first .plan td {
    height: 111px;
    border-top: none;
}

.figure-row {
    height: 240px;
}

.plan .figure {
    padding: 26px 0 0 110px;
}

.scrollbar {
    grid-area: 1 / 3 / 3 / 4;
    display: flex;
    flex-direction: column;
    align-items: center;
    padding-top: 5px;
    background: #dce0e8;
}

.split {
    width: 9px;
    height: 2px;
    margin-bottom: 2px;
    background: #7c828a;
}

.ruler-toggle {
    width: 16px;
    height: 17px;
    border: 1px solid #7f868e;
}

.arrow {
    width: 17px;
    height: 18px;
}

.track {
    display: flex;
    flex-direction: column;
    flex: 1;
}

.track::before {
    content: '';
    flex: 262;
}

.track::after {
    content: '';
    flex: 155;
}

.thumb {
    width: 16px;
    height: 43px;
    border: 1px solid #878e9c;
    background:
        repeating-linear-gradient(#8b9098 0 1px, transparent 1px 2px) center / 8px 7px no-repeat,
        linear-gradient(90deg, #f7f8fa, #dfe2e9);
}

.browse {
    display: flex;
    flex-direction: column;
    width: 17px;
    height: 52px;
    border-top: 1px solid #bcc1d0;
}

.browse button {
    flex: 1;
}

/* Status bar */
.statusbar {
    display: flex;
    align-items: center;
    flex: none;
    height: 22px;
    border-top: 1px solid #8a93a0;
    background: linear-gradient(#e8eaed, #d3d6da 50%, #bfc3c9);
}

.status {
    height: 20px;
    border-right: 1px solid #8f959d;
    justify-content: flex-start;
    padding-left: 8px;
}

.pages { width: 106px; }
.words { width: 102px; padding-left: 9px; }
.language { width: 148px; gap: 16px; }

.views {
    display: flex;
    align-items: center;
    height: 20px;
    margin-left: auto;
    padding-left: 4px;
    border-left: 1px solid #8f959d;
}

.views button {
    width: 18px;
    height: 18px;
}

.percent {
    width: 45px;
}

.zoom {
    display: flex;
    align-items: center;
    padding-right: 4px;
}

.zoom button {
    width: 16px;
    height: 16px;
    border: 1px solid #70767e;
    border-radius: 50%;
    background: #f1f2f4;
    font-size: 16px;
    line-height: 14px;
}

.zoom input {
    width: 100px;
    height: 16px;
    appearance: none;
    background: linear-gradient(#858b93, #858b93) center / 100% 1px no-repeat;
}

.zoom input::-webkit-slider-thumb {
    appearance: none;
    width: 9px;
    height: 13px;
    background: linear-gradient(#fff, #ddd);
    border: 1px solid #666;
    border-radius: 1px 1px 5px 5px;
}

/* Taskbar */
.taskbar {
    display: flex;
    flex: none;
    gap: 4px;
    height: 40px;
    background: linear-gradient(90deg, #2a7186, #2d8298 25%, #2b8ba6 45%, #2a8299 65%, #2b7488);
    color: #fff;
    font-size: 12px;
}

.start {
    width: 56px;
    padding-top: 4px;
    padding-right: 4px;
}

.task {
    width: 158px;
    height: 39px;
    gap: 5px;
    justify-content: flex-start;
    padding-left: 9px;
    border: 1px solid rgba(190, 225, 235, 0.6);
    background: rgba(255, 255, 255, 0.18);
    font-size: 11px;
}

.task svg {
    width: 30px;
}

.task.current {
    border-color: #e8f4f7;
    background: rgba(255, 255, 255, 0.4);
}

.tray {
    display: flex;
    align-items: center;
    gap: 8px;
    margin-left: auto;
}

.lang {
    width: 48px;
}

.clock {
    flex-direction: column;
    width: 72px;
    padding-right: 12px;
    font-size: 11px;
}
```
